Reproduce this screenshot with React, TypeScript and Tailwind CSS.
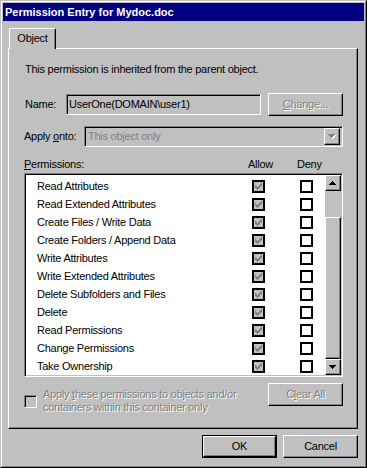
import React from "react"

const RAISED =
  "border border-t-white border-l-white border-r-black border-b-black shadow-[inset_-1px_-1px_0_#808080]"
const SUNKEN =
  "border border-t-[#808080] border-l-[#808080] border-r-white border-b-white shadow-[inset_1px_1px_0_#000,inset_-1px_-1px_0_#c0c0c0]"
const DISABLED = "text-[#808080] [text-shadow:1px_1px_0_#fff]"

const permissions = [
  "Read Attributes",
  "Read Extended Attributes",
  "Create Files / Write Data",
  "Create Folders / Append Data",
  "Write Attributes",
  "Write Extended Attributes",
  "Delete Subfolders and Files",
  "Delete",
  "Read Permissions",
  "Change Permissions",
  "Take Ownership",
]

const checkPixels: [number, number][] = [
  [6, 0],
  [5, 1], [6, 1],
  [0, 2], [4, 2], [5, 2], [6, 2],
  [0, 3], [1, 3], [3, 3], [4, 3], [5, 3],
  [0, 4], [1, 4], [2, 4], [3, 4], [4, 4],
  [1, 5], [2, 5], [3, 5],
  [2, 6],
]

function CheckMark() {
  return (
    <svg width="7" height="7" shapeRendering="crispEdges" className="block">
      {checkPixels.map(([x, y]) => (
        <rect key={`${x}-${y}`} x={x} y={y} width="1" height="1" fill="#808080" />
      ))}
    </svg>
  )
}

// little pixel triangle, rows 7,5,3,1 wide
function Arrow({ up = false, color = "#000", shadow = false }: { up?: boolean; color?: string; shadow?: boolean }) {
  const rows = [0, 1, 2, 3].map((i) => ({ x: i, w: 7 - i * 2, y: up ? 3 - i : i }))
  return (
    <svg width="8" height="5" shapeRendering="crispEdges" className="block">
      {shadow && rows.map((r) => <rect key={`s${r.y}`} x={r.x + 1} y={r.y + 1} width={r.w} height="1" fill="#fff" />)}
      {rows.map((r) => (
        <rect key={r.y} x={r.x} y={r.y} width={r.w} height="1" fill={color} />
      ))}
    </svg>
  )
}

function Button({ children, disabled = false, isDefault = false }: { children: React.ReactNode; disabled?: boolean; isDefault?: boolean }) {
  const inner = (
    <div className={`${RAISED} bg-[#c0c0c0] flex h-full w-full items-center justify-center ${disabled ? DISABLED : ""}`}>
      {children}
    </div>
  )
  return (
    <div className={`h-[23px] w-[75px] ${isDefault ? "border border-black" : ""}`}>{inner}</div>
  )
}

export default function App() {
  return (
    <div className="h-[468px] w-[367px] border border-t-[#c0c0c0] border-l-[#c0c0c0] border-r-black border-b-black bg-[#c0c0c0] font-['Liberation_Sans',Arial,sans-serif] text-[11px] leading-[13px] text-black">
      <div className="h-full w-full border border-t-white border-l-white border-r-[#808080] border-b-[#808080] p-[1px]">
        {/* Title bar */}
        <div className="flex h-[18px] items-center bg-[#000080] pl-[2px] font-bold text-white">
          Permission Entry for Mydoc.doc
        </div>

        <div className="tracking-[-0.25px]">
          {/* Tab */}
          <div className="mt-[7px] pl-[6px]">
            <div className="relative z-10 -mb-[1px] flex h-[21px] w-[47px] items-center justify-center rounded-t-[2px] border-t border-l border-r border-t-white border-l-white border-r-black bg-[#c0c0c0] pb-[1px] shadow-[inset_-1px_0_0_#808080]">
              Object
            </div>
          </div>

          {/* Panel */}
          <div className="ml-[5px] h-[381px] w-[350px] border border-t-white border-l-white border-r-black border-b-black shadow-[inset_-1px_-1px_0_#808080]">
            <div className="flex flex-col pl-[15px] pr-[14px] pt-[14px]">
              <div className="pl-[1px]">This permission is inherited from the parent object.</div>

              {/* Name */}
              <div className="mt-[17px] flex h-[23px] items-center">
                <div className="w-[42px] pl-[1px]">Name:</div>
                <div className={`${SUNKEN} flex h-[21px] w-[195px] items-center bg-[#c0c0c0] pl-[2px]`}>
                  UserOne(DOMAIN\user1)
                </div>
                <div className="ml-auto">
                  <Button disabled>
                    <span className="underline">C</span>hange...
                  </Button>
                </div>
              </div>

              {/* Apply onto */}
              <div className="mt-[10px] flex h-[21px] items-center">
                <div className="w-[60px]">
                  Apply <span className="underline">o</span>nto:
                </div>
                <div className={`${SUNKEN} flex h-[21px] flex-1 items-center bg-[#c0c0c0] p-[2px]`}>
                  <div className="flex-1 pl-[1px] text-[#808080]">This object only</div>
                  <div className={`${RAISED} flex h-[17px] w-[16px] items-center justify-center bg-[#c0c0c0]`}>
                    <Arrow color="#808080" shadow />
                  </div>
                </div>
              </div>

              {/* Header */}
              <div className="mt-[11px] flex h-[13px]">
                <div className="w-[224px]">
                  <span className="underline">P</span>ermissions:
                </div>
                <div className="w-[49px]">Allow</div>
                <div>Deny</div>
              </div>

              {/* List */}
              <div className={`${SUNKEN} mt-[2px] flex h-[204px] bg-white p-[1px]`}>
                <div className="flex-1 overflow-hidden pt-[2px]">
                  {permissions.map((p) => (
                    <div key={p} className="flex h-[18px] items-center pl-[11px]">
                      <div className="w-[215px] whitespace-nowrap">{p}</div>
                      <div className="flex h-[13px] w-[13px] items-center justify-center border-2 border-black bg-[#c0c0c0]">
                        <CheckMark />
                      </div>
                      <div className="ml-[35px] h-[13px] w-[13px] border-2 border-black bg-white" />
                    </div>
                  ))}
                </div>
                <div className="flex w-[16px] flex-col bg-[#c0c0c0]">
                  <div className={`${RAISED} flex h-[16px] items-center justify-center`}>
                    <Arrow up />
                  </div>
                  <div className="flex flex-1 flex-col pt-[26px]">
                    <div className={`${RAISED} flex-1`} />
                  </div>
                  <div className={`${RAISED} flex h-[16px] items-center justify-center`}>
                    <Arrow />
                  </div>
                </div>
              </div>

              {/* Bottom row */}
              <div className="mt-[6px] flex items-start">
                <div className="flex items-center pt-[5px]">
                  <div className="h-[13px] w-[13px] border border-t-[#808080] border-l-[#808080] border-r-white border-b-white bg-[#c0c0c0] shadow-[inset_1px_1px_0_#000]" />
                  <div className={`ml-[6px] ${DISABLED}`}>
                    Apply <span className="underline">t</span>hese permissions to objects and/or
                    <br />
                    containers within this container only
                  </div>
                </div>
                <div className="ml-auto">
                  <Button disabled>
                    C<span className="underline">l</span>ear All
                  </Button>
                </div>
              </div>
            </div>
          </div>

          {/* Dialog buttons */}
          <div className="ml-[5px] mt-[6px] flex w-[350px] justify-end gap-[6px]">
            <Button isDefault>OK</Button>
            <Button>Cancel</Button>
          </div>
        </div>
      </div>
    </div>
  )
}
